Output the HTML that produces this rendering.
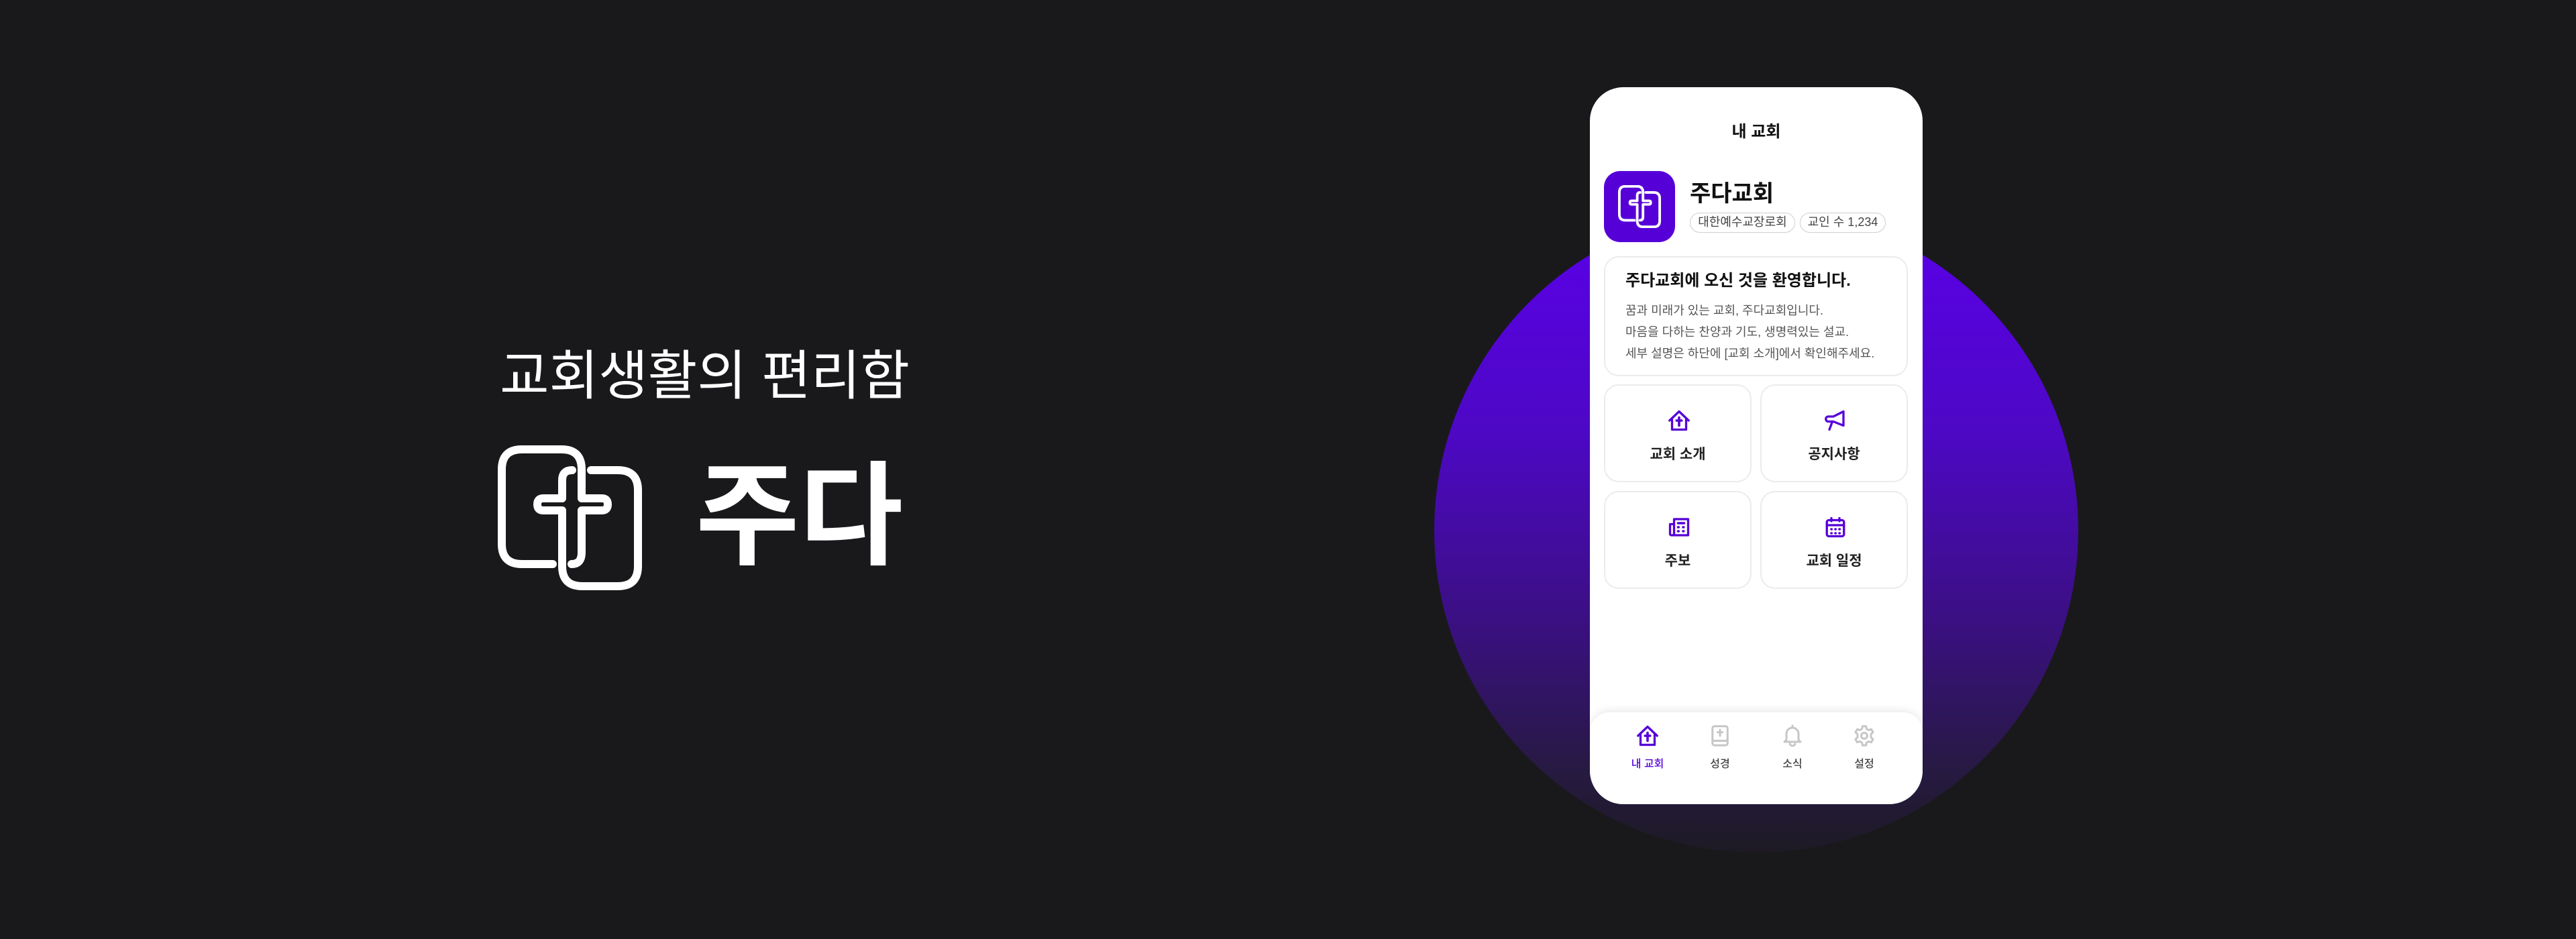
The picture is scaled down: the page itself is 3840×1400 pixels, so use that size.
<!DOCTYPE html>
<html><head><meta charset="utf-8"><style>
*{margin:0;padding:0;box-sizing:border-box}
body{width:3840px;height:1400px;background:#19191c;position:relative;overflow:hidden;font-family:"Liberation Sans","Noto Sans CJK KR",sans-serif}
.abs{position:absolute}
.circle{left:2138px;top:311px;width:960px;height:960px;border-radius:50%;background:linear-gradient(180deg,#5b00ea 0%,#4d08c4 35%,#3a1080 65%,#261a40 88%,#1d1a24 100%)}
.phone{left:2370px;top:130px;width:496px;height:1069px;background:#fff;border-radius:50px;overflow:hidden}
.title{left:0;width:100%;top:52px;text-align:center;font-size:24px;font-weight:700;color:#111;line-height:30px}
.logo{left:21px;top:125px;width:106px;height:106px;border-radius:24px;background:#5600d8}
.name{left:149px;top:139px;font-size:34px;font-weight:700;color:#111;line-height:40px}
.badge{top:187px;height:30px;border:1.5px solid #cfcfcf;border-radius:15px;font-size:18px;color:#444;line-height:27px;padding:0 8px;white-space:nowrap;text-align:center}
.card{border:2px solid #ebebeb;border-radius:22px;background:#fff}
.gc{width:220px;height:146px}
.gc svg{position:absolute;left:92px;top:34px}
.gc div{position:absolute;left:0;width:100%;top:86px;text-align:center;font-size:21px;font-weight:700;color:#222}
.nav{left:0;top:932px;width:496px;height:140px;background:#fff;border-radius:30px 30px 0 0;box-shadow:0 -4px 12px rgba(0,0,0,.08)}
.ni{position:absolute;top:17px;width:80px;margin-left:-40px;text-align:center}
.ni svg{display:block;margin:0 auto}
.ni div{margin-top:10px;font-size:16px;color:#444;font-weight:500}
</style></head><body>
<div class="abs" style="left:745px;top:515px;font-size:80px;color:#fff;line-height:92px;white-space:nowrap">교회생활의 편리함</div>
<svg class="abs" style="left:742px;top:664px" width="215" height="216" viewBox="0 0 215 216" fill="none" stroke="#fff" stroke-width="12" stroke-linecap="round" stroke-linejoin="round">
<path d="M82,177 H36 Q6,177 6,147 V36 Q6,6 36,6 H95 Q125,6 125,36 V79 H155 Q164,79 164,88 Q164,97 155,97 H125 V160 Q125,177 110,177"/>
<path d="M139,37 H179 Q209,37 209,67 V180 Q209,210 179,210 H126 Q96,210 96,180 V97 H68 Q59,97 59,88 Q59,79 68,79 H96 V52 Q96,37 111,37"/>
</svg>
<div class="abs" style="left:1037px;top:670px;font-size:168px;font-weight:700;color:#fff;line-height:200px;white-space:nowrap">주다</div>

<div class="abs circle"></div>
<div class="abs phone">
 <div class="abs title">내 교회</div>
 <div class="abs logo">
  <svg class="abs" style="left:21px;top:21px" width="64" height="64" viewBox="0 0 215 216" fill="none" stroke="#fff" stroke-width="13" stroke-linecap="round" stroke-linejoin="round">
  <path d="M82,177 H36 Q6,177 6,147 V36 Q6,6 36,6 H95 Q125,6 125,36 V79 H155 Q164,79 164,88 Q164,97 155,97 H125 V160 Q125,177 110,177"/>
  <path d="M139,37 H179 Q209,37 209,67 V180 Q209,210 179,210 H126 Q96,210 96,180 V97 H68 Q59,97 59,88 Q59,79 68,79 H96 V52 Q96,37 111,37"/>
  </svg>
 </div>
 <div class="abs name">주다교회</div>
 <div class="abs badge" style="left:149px;width:157px">대한예수교장로회</div>
 <div class="abs badge" style="left:313px;width:128px">교인 수 1,234</div>
 <div class="abs card" style="left:21px;top:252px;width:453px;height:179px">
  <div class="abs" style="left:30px;top:20px;font-size:24px;font-weight:700;color:#111;line-height:30px;white-space:nowrap">주다교회에 오신 것을 환영합니다.</div>
  <div class="abs" style="left:30px;top:63px;font-size:18px;color:#555;line-height:32px;white-space:nowrap">꿈과 미래가 있는 교회, 주다교회입니다.<br>마음을 다하는 찬양과 기도, 생명력있는 설교.<br>세부 설명은 하단에 [교회 소개]에서 확인해주세요.</div>
 </div>
 <div class="abs card gc" style="left:21px;top:443px">
  <svg width="36" height="36" viewBox="0 0 24 24" fill="none" stroke="#5600d8" stroke-width="2.2" stroke-linejoin="round" stroke-linecap="round"><path d="M5,11 V21 H19 V11 M2.5,12 L12,3 L21.5,12"/><path d="M12,9 V17 M9.5,12 H14.5" stroke-width="2.4"/></svg>
  <div>교회 소개</div></div>
 <div class="abs card gc" style="left:254px;top:443px">
  <svg width="36" height="36" viewBox="0 0 24 24" fill="none" stroke="#5600d8" stroke-width="2.2" stroke-linejoin="round" stroke-linecap="round"><path d="M20,3 V17 L10,13 H5 A2.5,2.5 0 0 1 5,8 H10 Z"/><path d="M9,13 L6,21"/></svg>
  <div>공지사항</div></div>
 <div class="abs card gc" style="left:21px;top:602px">
  <svg width="36" height="36" viewBox="0 0 24 24" fill="none" stroke="#5600d8" stroke-width="2.2" stroke-linejoin="round" stroke-linecap="round"><path d="M7,4 H21 V20 H4 A1.5,1.5 0 0 1 3,18.5 V9 H7 Z M7,9 V20"/><path d="M11,8 H17 M11,12 h.5 M16,12 h.5 M11,16 h.5 M16,16 h.5" stroke-width="2.4"/></svg>
  <div>주보</div></div>
 <div class="abs card gc" style="left:254px;top:602px">
  <svg width="36" height="36" viewBox="0 0 24 24" fill="none" stroke="#5600d8" stroke-width="2.2" stroke-linejoin="round" stroke-linecap="round"><rect x="3.5" y="5" width="17" height="16" rx="2"/><path d="M3.5,10 H20.5 M8,3 V6 M16,3 V6"/><path d="M8,14 h.2 M12,14 h.2 M16,14 h.2 M8,18 h.2 M12,18 h.2 M16,18 h.2" stroke-width="2.4"/></svg>
  <div>교회 일정</div></div>
 <div class="abs nav">
  <div class="ni" style="left:86px"><svg width="36" height="36" viewBox="0 0 24 24" fill="none" stroke="#5600d8" stroke-width="2.2" stroke-linejoin="round" stroke-linecap="round"><path d="M5,11 V21 H19 V11 M2.5,12 L12,3 L21.5,12"/><path d="M12,9 V17 M9.5,12 H14.5" stroke-width="2.4"/></svg><div style="color:#5600d8">내 교회</div></div>
  <div class="ni" style="left:194px"><svg width="36" height="36" viewBox="0 0 24 24" fill="none" stroke="#c6c6c6" stroke-width="2" stroke-linejoin="round" stroke-linecap="round"><rect x="4.5" y="2.5" width="15" height="19" rx="2"/><path d="M4.5,17 H19.5 M12,6 V12 M9.5,8.5 H14.5"/></svg><div>성경</div></div>
  <div class="ni" style="left:302px"><svg width="36" height="36" viewBox="0 0 24 24" fill="none" stroke="#c6c6c6" stroke-width="2" stroke-linejoin="round" stroke-linecap="round"><path d="M12,2 V4 M6,16 V10 A6,6 0 0 1 18,10 V16 L20,18 H4 Z M9.5,20 A2.5,2 0 0 0 14.5,20"/></svg><div>소식</div></div>
  <div class="ni" style="left:409px"><svg width="36" height="36" viewBox="0 0 24 24" fill="none" stroke="#c6c6c6" stroke-width="2" stroke-linejoin="round"><circle cx="12" cy="12" r="3"/><path d="M10.3,2.5 H13.7 L14.3,5.2 L16.4,6.4 L19,5.5 L20.7,8.5 L18.7,10.3 V13.7 L20.7,15.5 L19,18.5 L16.4,17.6 L14.3,18.8 L13.7,21.5 H10.3 L9.7,18.8 L7.6,17.6 L5,18.5 L3.3,15.5 L5.3,13.7 V10.3 L3.3,8.5 L5,5.5 L7.6,6.4 L9.7,5.2 Z"/></svg><div>설정</div></div>
 </div>
</div>
</body></html>
